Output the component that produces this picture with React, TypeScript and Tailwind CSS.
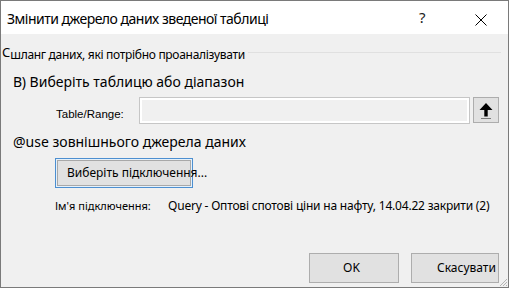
const sans = "font-['Noto_Sans',sans-serif]";

function UpArrow() {
  return (
    <svg width="14" height="18" viewBox="0 0 14 18">
      <path d="M7 1 L0.5 8 L5.3 8 L5.3 14.5 L8.7 14.5 L8.7 8 L13.5 8 Z" fill="#000" />
      <rect x="2" y="16" width="10" height="1" fill="#7a7a7a" />
    </svg>
  );
}

function Grip() {
  return (
    <svg width="10" height="10" viewBox="0 0 10 10">
      <path d="M9 2 L2 9 M9 5 L5 9 M9 8 L8 9" stroke="#b4b4b4" strokeWidth="1" />
    </svg>
  );
}

export default function App() {
  return (
    <div className={`w-[509px] h-[288px] border border-[#7a7a7a] bg-[#f0f0f0] flex flex-col text-black ${sans}`}>
      {/* title bar */}
      <div className="h-[33px] bg-white flex items-start shrink-0">
        <div className="pl-[6px] pt-[8px] text-[14px] leading-[20px] tracking-[-0.5px] flex-1">Змінити джерело даних зведеної таблиці</div>
        <div className="pt-[6px] text-[15px] leading-[20px] w-[12px] mr-[44px] text-[#222]">?</div>
        <div className="pt-[13px] mr-[21px]">
          <svg width="12" height="12" viewBox="0 0 12 12">
            <path d="M0.5 0.5 L11.5 11.5 M11.5 0.5 L0.5 11.5" stroke="#000" strokeWidth="1" />
          </svg>
        </div>
      </div>

      {/* body */}
      <div className="flex-1 flex flex-col pt-[10px]">
        <div className="flex items-start pr-[7px]">
          <span className="pl-[1px] text-[13px] leading-[16px]">C</span>
          <span className="mt-[3px] text-[12px] leading-[16px] tracking-[-0.3px]">шланг даних, які потрібно проаналізувати</span>
          <div className="flex-1 h-px bg-[#e0e0e0] mt-[8px] ml-[3px]" />
        </div>

        <div className="mt-[9px] pl-[12px] text-[14px] leading-[20px]">В) Виберіть таблицю або діапазон</div>

        <div className="mt-[5px] flex items-start pr-[8px]">
          <span className="w-[138px] pl-[55px] mt-[10px] text-[11.5px] leading-[14px] font-['Liberation_Sans',sans-serif]">Table/Range:</span>
          <div className="w-[331px] h-[27px] border border-[#c6c6c6] bg-white p-[2px]">
            <div className="w-full h-full bg-[#f0f0f0]" />
          </div>
          <div className="ml-[3px] w-[26px] h-[26px] border border-[#adadad] bg-[#e1e1e1] flex items-center justify-center pt-[2px]">
            <UpArrow />
          </div>
        </div>

        <div className="mt-[8px] pl-[12px] text-[14px] leading-[20px]">@use зовнішнього джерела даних</div>

        <div className="mt-[6px] pl-[54px] flex">
          <div className="w-[138px] h-[30px] border border-[#4d8fd0] bg-[#e5f1fb] p-px">
            <div className="w-full h-full border border-[#a8a8a8] bg-[#e1e1e1] flex items-center pl-[9px] whitespace-nowrap text-[12px] leading-[16px]">
              Виберіть підключення...
            </div>
          </div>
        </div>

        <div className="mt-[10px] flex items-end whitespace-nowrap">
          <span className="pl-[54px] w-[167px] text-[11px] leading-[16px]">Ім'я підключення:</span>
          <span className="text-[12px] leading-[16px] tracking-[-0.2px]">Query - Оптові спотові ціни на нафту, 14.04.22 закрити (2)</span>
        </div>

        <div className="mt-auto flex items-end justify-end pb-[4px]">
          <div className="w-[90px] h-[30px] border border-[#adadad] bg-[#e1e1e1] flex items-center justify-center text-[12px] leading-[16px] pr-[5px]">OK</div>
          <div className="ml-[12px] w-[88px] h-[30px] border border-[#adadad] bg-[#e1e1e1] flex items-center pl-[25px] text-[12px] leading-[16px] whitespace-nowrap">Скасувати</div>
          <div className="ml-[-1px] mb-[-4px] self-end">
            <Grip />
          </div>
        </div>
      </div>
    </div>
  );
}
